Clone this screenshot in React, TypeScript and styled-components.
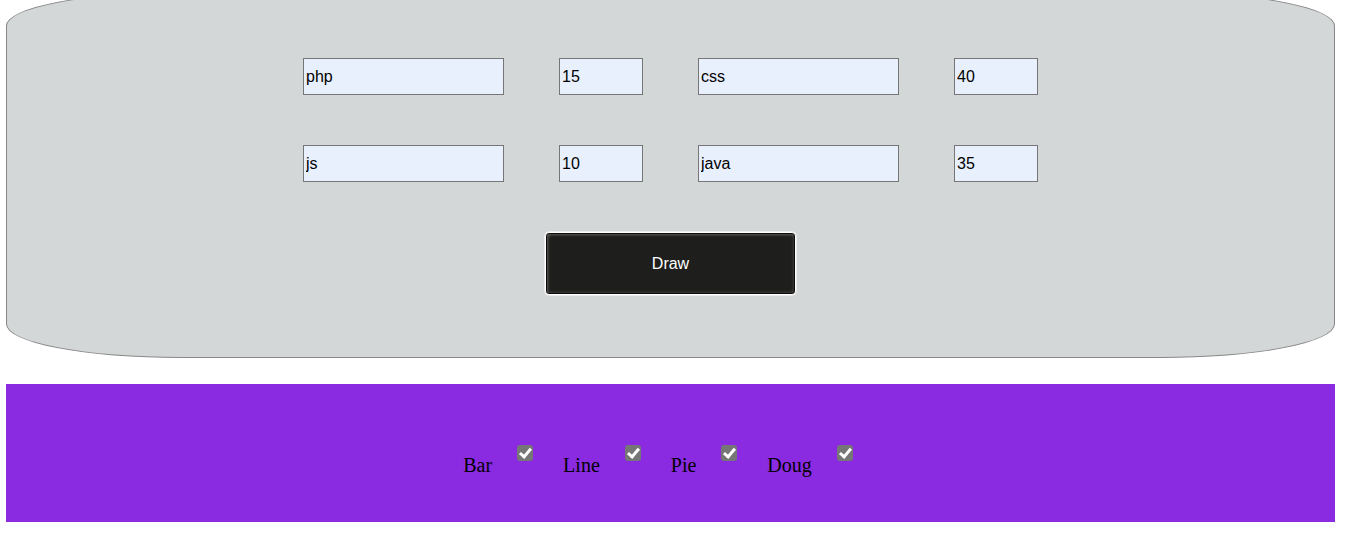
import React from "react";
import styled, { createGlobalStyle } from "styled-components";

const Global = createGlobalStyle`
  html, body { margin: 0; padding: 0; background: #fff; }
  body { font-family: "Liberation Serif", "Times New Roman", serif; }
`;

const Page = styled.div`
  width: 1329px;
  padding-left: 6px;
`;

const Panel = styled.div`
  margin-top: -8px;
  height: 299px;
  padding-top: 65px;
  box-sizing: content-box;
  background: #d4d7d8;
  border: 1px solid #878787;
  border-radius: 175px / 34px;
  display: flex;
  flex-direction: column;
  align-items: center;
`;

const Grid = styled.div`
  display: grid;
  grid-template-columns: 201px 84px 201px 84px;
  column-gap: 55px;
  row-gap: 50px;
`;

const Field = styled.input`
  box-sizing: border-box;
  width: 100%;
  height: 37px;
  margin: 0;
  padding: 1px 2px;
  font-family: "Liberation Sans", Arial, sans-serif;
  font-size: 16px;
  color: #000;
  background: #e8f0fe;
  border: 1px solid #767676;
  border-radius: 0;
  outline: none;
`;

const DrawButton = styled.button`
  box-sizing: border-box;
  margin-top: 50px;
  width: 251px;
  height: 63px;
  padding: 0;
  background: #1e1f1c;
  color: #fff;
  font-family: "Liberation Sans", Arial, sans-serif;
  font-size: 16px;
  border: 1px solid #ffffff;
  border-radius: 4px;
  box-shadow: 0 0 0 0.5px #fff, inset 0 0 0 1px #0a0a09,
    inset 2px 2px 3px rgba(255, 255, 255, 0.28),
    inset -2px -2px 3px rgba(255, 255, 255, 0.14);
  cursor: pointer;
`;

const Options = styled.div`
  margin-top: 26px;
  height: 138px;
  background: #8a2be2;
  display: flex;
  justify-content: center;
  align-items: flex-start;
  padding: 61px 0 0 5px;
  box-sizing: border-box;
`;

const Option = styled.label`
  display: flex;
  align-items: flex-start;
`;

const OptionText = styled.span`
  margin-top: 9px;
  font-family: "Liberation Serif", "Times New Roman", serif;
  font-size: 20px;
  color: #000;
`;

const Check = styled.input`
  appearance: none;
  -webkit-appearance: none;
  position: relative;
  width: 16px;
  height: 16px;
  margin: 0 30px 0 25px;
  background: #767676;
  border-radius: 3px;
  &::after {
    content: "";
    position: absolute;
    left: 5px;
    top: 1px;
    width: 4px;
    height: 9px;
    border-right: 3px solid #fff;
    border-bottom: 3px solid #fff;
    transform: rotate(40deg);
  }
`;

const rows = [
  ["php", "15", "css", "40"],
  ["js", "10", "java", "35"],
];

const charts = ["Bar", "Line", "Pie", "Doug"];

export default function App() {
  return (
    <>
      <Global />
      <Page>
        <Panel>
          <Grid>
            {rows.flat().map((v, i) => (
              <Field key={i} type="text" defaultValue={v} />
            ))}
          </Grid>
          <DrawButton>Draw</DrawButton>
        </Panel>
        <Options>
          {charts.map((c) => (
            <Option key={c}>
              <OptionText>{c}</OptionText>
              <Check type="checkbox" defaultChecked />
            </Option>
          ))}
        </Options>
      </Page>
    </>
  );
}
